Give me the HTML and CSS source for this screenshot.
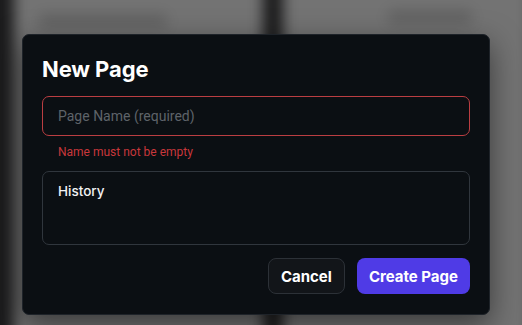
FILE: index.html
```html
<!DOCTYPE html>
<html lang="en">
<head>
  <meta charset="UTF-8" />
  <meta name="viewport" content="width=device-width, initial-scale=1.0" />
  <title>New Page</title>
  <link rel="stylesheet" href="styles.css">
</head>
<body>
  <div class="page">
    <div class="backdrop">
      <div class="card">
        <div class="card-line wide"></div>
      </div>
      <div class="card">
        <div class="card-line short"></div>
      </div>
    </div>

    <div class="dialog">
      <h1>New Page</h1>

      <input class="field invalid" type="text" placeholder="Page Name (required)" />
      <div class="error">Name must not be empty</div>

      <textarea class="field notes">History</textarea>

      <div class="actions">
        <button class="btn secondary">Cancel</button>
        <button class="btn primary">Create Page</button>
      </div>
    </div>
  </div>
</body>
</html>
```

FILE: styles.css
```css
body {
  margin: 0;
  background: #1b1b1c;
  font-family: "Inter", "Roboto", sans-serif;
}

.page {
  position: relative;
  height: 325px;
  overflow: hidden;
}

.backdrop {
  display: flex;
  gap: 20px;
  height: 385px;
  margin: -30px -10px 0 14px;
  filter: blur(7px);
}

.card {
  flex: 1;
  background: #737373;
  padding: 44px 24px 0;
}

.card-line {
  height: 14px;
  background: #616161;
  border-radius: 7px;
}

.card-line.wide {
  width: 130px;
}

.card-line.short {
  width: 86px;
  margin: -4px 0 0 80px;
}

.dialog {
  position: absolute;
  left: 22px;
  top: 34px;
  width: 468px;
  box-sizing: border-box;
  padding: 22px 19px 20px;
  background: #0b0f13;
  border: 1px solid #1e2329;
  border-radius: 7px;
  box-shadow: 0 10px 30px rgba(0, 0, 0, 0.5);
}

h1 {
  margin: 0 0 15px;
  color: #ffffff;
  font-size: 22px;
  font-weight: 700;
  line-height: 24px;
  letter-spacing: -0.1px;
}

.field {
  display: block;
  width: 100%;
  box-sizing: border-box;
  background: #0b0f13;
  border: 1px solid #30363d;
  border-radius: 7px;
  color: #e8eaed;
  font-family: "Roboto", sans-serif;
  font-size: 14px;
  outline: none;
}

input.field {
  height: 40px;
  padding: 0 15px;
}

.field.invalid {
  border-color: #bb3e42;
}

.field::placeholder {
  color: #5e6369;
}

.error {
  margin: 9px 0 0 16px;
  color: #c9373b;
  font-family: "Roboto", sans-serif;
  font-size: 12px;
  line-height: 15px;
}

.notes {
  margin-top: 11px;
  height: 74px;
  padding: 11px 15px;
  resize: none;
  font-family: "Inter", sans-serif;
  font-weight: 500;
  font-size: 13.5px;
  line-height: 17px;
  color: #f1f2f4;
}

.actions {
  display: flex;
  justify-content: flex-end;
  gap: 12px;
  margin-top: 13px;
}

.btn {
  height: 36px;
  padding: 0 12px;
  border-radius: 8px;
  font-family: "Inter", sans-serif;
  font-size: 15px;
  font-weight: 700;
  color: #ffffff;
  cursor: pointer;
}

.btn.secondary {
  background: #121519;
  border: 1px solid #2c3137;
}

.btn.primary {
  background: #4f3be6;
  border: none;
}
```
